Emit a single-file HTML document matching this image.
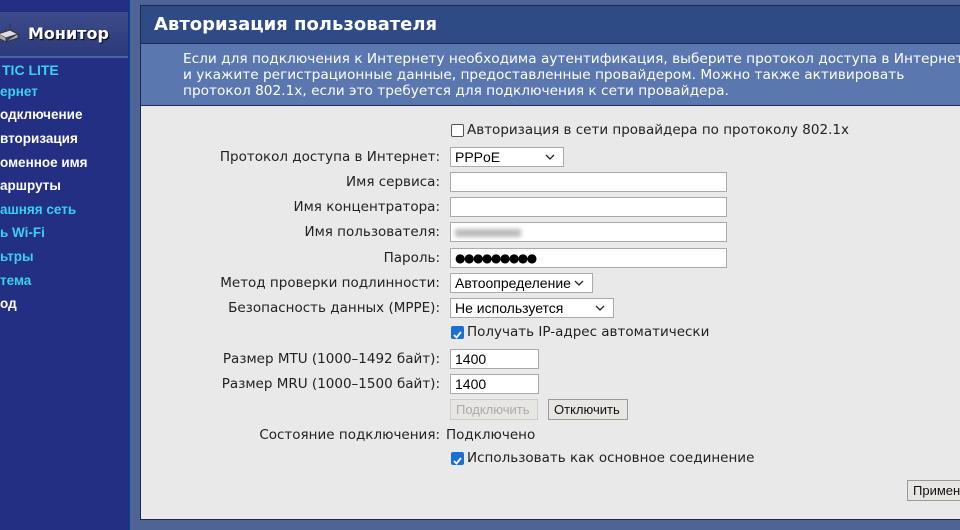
<!DOCTYPE html>
<html><head><meta charset="utf-8"><style>
*{margin:0;padding:0;box-sizing:border-box}
body{width:960px;height:530px;overflow:hidden;background:#4d6494;font-family:"DejaVu Sans","Liberation Sans",sans-serif;position:relative}
#side{position:absolute;left:0;top:0;width:130px;height:530px;background:#232f82;border-right:2px solid #0d3a8c}
#mon{position:absolute;left:0;top:12px;width:128px;height:46px;background:linear-gradient(#3d4b8a,#2a3a7a);border-bottom:2px solid #4a64a8}
#mon span{position:absolute;left:28px;top:12px;color:#fff;font:bold 16px "DejaVu Sans",sans-serif;text-shadow:1px 1px 1px #000}
#side .it{position:absolute;font:bold 13.5px "Liberation Sans",sans-serif;color:#fff;white-space:nowrap}
.c{color:#3ad0f0!important}
#panel{position:absolute;left:140px;top:5px;width:830px;height:515px;background:#e9e9e9;border:1px solid #1b2a55}
#hd{height:38px;background:#2f4b86;color:#fff;font:bold 18px "DejaVu Sans",sans-serif;padding:8px 0 0 13px;border-bottom:1px solid #1b2a55}
#ds{height:62px;background:#5b77b0;color:#fff;font-size:13.7px;line-height:16px;padding:7px 0 0 42px;white-space:nowrap;border-bottom:1px solid #1b2a55}
.l{position:absolute;right:520px;font-size:13.5px;color:#222;white-space:nowrap}
.in{position:absolute;left:450px;height:20px;background:#fff;border:1px solid #aaa;font:14px "Liberation Sans",sans-serif;padding:1px 4px;color:#000}
.cb{position:absolute;width:13px;height:13px;border-radius:2px}
.t{position:absolute;font-size:13.5px;color:#222;white-space:nowrap}
.btn{position:absolute;height:21px;border:1px solid #999;background:#e8e6e2;font:13px "Liberation Sans",sans-serif;padding:2px 5px}
.v{position:absolute;right:8px;top:6px}
</style></head><body>
<div id="side">
<div id="mon"><svg style="position:absolute;left:-4px;top:12px" width="24" height="20"><path d="M2 10 L14 6 L22 10 L10 14Z" fill="#ddd" stroke="#333"/><path d="M2 10v4l8 4v-4M10 18l12-4v-4" fill="#aaa" stroke="#333"/><line x1="14" y1="6" x2="14" y2="0" stroke="#333"/></svg><span>Монитор</span></div>
<div class="it c" style="left:2px;top:62px;font-size:14px">TIC LITE</div>
<div class="it c" style="left:0;top:84px">ернет</div>
<div class="it" style="left:0;top:107px">одключение</div>
<div class="it" style="left:0;top:131px">вторизация</div>
<div class="it" style="left:0;top:155px">оменное имя</div>
<div class="it" style="left:0;top:178px">аршруты</div>
<div class="it c" style="left:0;top:202px">ашняя сеть</div>
<div class="it c" style="left:0;top:225px">ь Wi-Fi</div>
<div class="it c" style="left:0;top:249px">ьтры</div>
<div class="it c" style="left:0;top:273px">тема</div>
<div class="it" style="left:0;top:296px">од</div>
</div>
<div id="panel">
<div id="hd">Авторизация пользователя</div>
<div id="ds">Если для подключения к Интернету необходима аутентификация, выберите протокол доступа в Интернет<br>и укажите регистрационные данные, предоставленные провайдером. Можно также активировать<br>протокол 802.1x, если это требуется для подключения к сети провайдера.</div>
</div>
<div style="position:absolute;left:0;top:0;width:960px;height:530px">
<div class="cb" style="left:451px;top:124px;background:#fff;border:1px solid #555"></div>
<div class="t" style="left:467px;top:122px">Авторизация в сети провайдера по протоколу 802.1x</div>
<div class="l" style="top:149px">Протокол доступа в Интернет:</div>
<div class="in" style="top:147px;width:114px">PPPoE<svg class="v" width="10" height="6"><path d="M1 1l4 4 4-4" stroke="#222" stroke-width="1.3" fill="none"/></svg></div>
<div class="l" style="top:174px">Имя сервиса:</div>
<div class="in" style="top:172px;width:277px"></div>
<div class="l" style="top:199px">Имя концентратора:</div>
<div class="in" style="top:197px;width:277px"></div>
<div class="l" style="top:224px">Имя пользователя:</div>
<div class="in" style="top:222px;width:277px"><span style="display:inline-block;width:66px;height:8px;background:#bbb;filter:blur(2px);margin-top:4px"></span></div>
<div class="l" style="top:250px">Пароль:</div>
<div class="in" style="top:248px;width:277px;font:12px 'DejaVu Sans',sans-serif;letter-spacing:-1.5px;padding-top:2px">●●●●●●●●●</div>
<div class="l" style="top:275px">Метод проверки подлинности:</div>
<div class="in" style="top:273px;width:143px">Автоопределение<svg class="v" width="10" height="6"><path d="M1 1l4 4 4-4" stroke="#222" stroke-width="1.3" fill="none"/></svg></div>
<div class="l" style="top:300px">Безопасность данных (MPPE):</div>
<div class="in" style="top:298px;width:164px">Не используется<svg class="v" width="10" height="6"><path d="M1 1l4 4 4-4" stroke="#222" stroke-width="1.3" fill="none"/></svg></div>
<div class="cb" style="left:451px;top:326px;background:#1a6fd6"><svg width="13" height="13"><path d="M3 7l2.5 2.5L10 4" stroke="#fff" stroke-width="1.8" fill="none"/></svg></div>
<div class="t" style="left:467px;top:324px">Получать IP-адрес автоматически</div>
<div class="l" style="top:351px">Размер MTU (1000–1492 байт):</div>
<div class="in" style="top:349px;width:89px">1400</div>
<div class="l" style="top:376px">Размер MRU (1000–1500 байт):</div>
<div class="in" style="top:374px;width:89px">1400</div>
<div class="btn" style="left:450px;top:399px;width:88px;color:#aaa;border-color:#ccc">Подключить</div>
<div class="btn" style="left:548px;top:399px;width:80px;color:#111">Отключить</div>
<div class="l" style="top:427px">Состояние подключения:</div>
<div class="t" style="left:446px;top:427px">Подключено</div>
<div class="cb" style="left:451px;top:452px;background:#1a6fd6"><svg width="13" height="13"><path d="M3 7l2.5 2.5L10 4" stroke="#fff" stroke-width="1.8" fill="none"/></svg></div>
<div class="t" style="left:467px;top:450px">Использовать как основное соединение</div>
<div class="btn" style="left:907px;top:480px;width:70px;color:#111">Применить</div>
</div>
</body></html>
